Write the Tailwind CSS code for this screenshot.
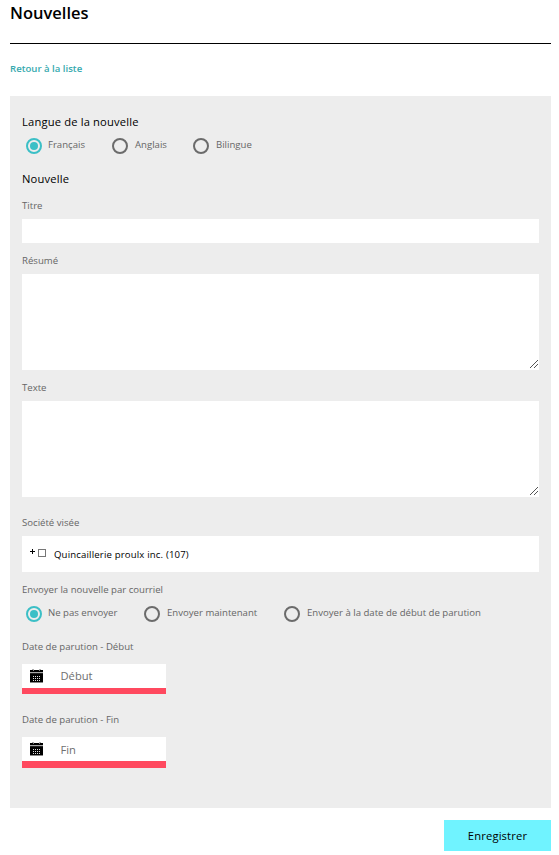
<!DOCTYPE html>
<html lang="fr">
<head>
    <meta charset="UTF-8">
    <meta name="viewport" content="width=device-width, initial-scale=1.0">
    <title>Nouvelles</title>
    <script src="https://cdn.jsdelivr.net/npm/@tailwindcss/browser@4"></script>
</head>
<body class="bg-white pl-[10px] pr-2 font-['Open_Sans',sans-serif] text-[9.6px] leading-4 text-[#666]">
    <h1 class="h-[26px] text-[16.5px] leading-[26px] font-semibold text-black">Nouvelles</h1>
    <hr class="mt-[17px] border-t border-black">
    <a href="#" class="mt-[17px] mb-[19px] block w-fit font-semibold text-[#35a9ae]">Retour à la liste</a>

    <form class="h-[712px] bg-[#ededed] px-3 pt-[18px]">
        <h2 class="text-[11.2px] leading-4 font-medium tracking-[0.16px] text-black">Langue de la nouvelle</h2>
        <div class="mt-2 flex h-4 pl-1">
            <label class="flex w-[86px] gap-1.5">
                <span class="flex size-4 shrink-0 items-center justify-center rounded-full border-2 border-[#3bbfc6]"><span class="size-2 rounded-full bg-[#3bbfc6]"></span></span>
                <span class="-mt-px whitespace-nowrap">Français</span>
            </label>
            <label class="flex w-[81px] gap-[7px]">
                <span class="size-4 shrink-0 rounded-full border-2 border-[#6b6b6b]"></span>
                <span class="-mt-px whitespace-nowrap">Anglais</span>
            </label>
            <label class="flex gap-[7px]">
                <span class="size-4 shrink-0 rounded-full border-2 border-[#6b6b6b]"></span>
                <span class="-mt-px whitespace-nowrap">Bilingue</span>
            </label>
        </div>

        <h2 class="mt-[17px] text-[11.2px] leading-4 font-medium tracking-[0.16px] text-black">Nouvelle</h2>
        <label for="titre" class="mt-[11px] block">Titre</label>
        <input type="text" id="titre" class="mt-[5px] block h-6 w-full bg-white px-2">
        <label for="resume" class="mt-[10px] block">Résumé</label>
        <div class="relative mt-[5px]">
            <textarea id="resume" class="block h-24 w-full resize-none bg-white p-2"></textarea>
            <svg class="absolute right-px bottom-0.5 h-2 w-2" viewBox="0 0 8 8" shape-rendering="crispEdges"><path fill="#555" d="M0 7h1v1H0zM1 6h1v1H1zM2 5h1v1H2zM3 4h1v1H3zM4 3h1v1H4zM5 2h1v1H5zM6 1h1v1H6zM7 0h1v1H7zM4 7h1v1H4zM5 6h1v1H5zM6 5h1v1H6zM7 4h1v1H7z"/></svg>
        </div>
        <label for="texte" class="mt-[10px] block">Texte</label>
        <div class="relative mt-[5px]">
            <textarea id="texte" class="block h-24 w-full resize-none bg-white p-2"></textarea>
            <svg class="absolute right-px bottom-0.5 h-2 w-2" viewBox="0 0 8 8" shape-rendering="crispEdges"><path fill="#555" d="M0 7h1v1H0zM1 6h1v1H1zM2 5h1v1H2zM3 4h1v1H3zM4 3h1v1H4zM5 2h1v1H5zM6 1h1v1H6zM7 0h1v1H7zM4 7h1v1H4zM5 6h1v1H5zM6 5h1v1H6zM7 4h1v1H7z"/></svg>
        </div>

        <p class="mt-[18px]">Société visée</p>
        <div class="mt-[5px] flex h-9 items-center bg-white pl-2 font-medium text-black">
            <svg class="-mt-[5px] h-[5px] w-[5px]" viewBox="0 0 5 5" shape-rendering="crispEdges"><path d="M2 0h1v5H2zM0 2h5v1H0z"/></svg>
            <span class="-mt-0.5 ml-[3px] size-2 border border-[#767676] bg-white"></span>
            <span class="mt-0.5 ml-2 tracking-[0.16px]">Quincaillerie proulx inc. (107)</span>
        </div>

        <p class="mt-[10px]">Envoyer la nouvelle par courriel</p>
        <div class="mt-2 flex h-4 pl-1">
            <label class="flex w-[118px] gap-1.5">
                <span class="flex size-4 shrink-0 items-center justify-center rounded-full border-2 border-[#3bbfc6]"><span class="size-2 rounded-full bg-[#3bbfc6]"></span></span>
                <span class="-mt-px whitespace-nowrap">Ne pas envoyer</span>
            </label>
            <label class="flex w-[140px] gap-[7px]">
                <span class="size-4 shrink-0 rounded-full border-2 border-[#6b6b6b]"></span>
                <span class="-mt-px whitespace-nowrap">Envoyer maintenant</span>
            </label>
            <label class="flex gap-[7px]">
                <span class="size-4 shrink-0 rounded-full border-2 border-[#6b6b6b]"></span>
                <span class="-mt-px whitespace-nowrap">Envoyer à la date de début de parution</span>
            </label>
        </div>

        <label for="debut" class="mt-[17px] block">Date de parution - Début</label>
        <div class="mt-[9px] flex h-[30px] w-36 items-center border-b-[6px] border-[#ff495f] bg-white pl-2">
            <svg class="h-[14px] w-[13px] shrink-0" viewBox="0 0 13 14" shape-rendering="crispEdges"><path fill="#000" d="M0 1h13v2H0zM0 5h13v8H0z"/><path fill="#aaa" d="M2 0h2v1H2zM9 0h2v1H9zM0 3h13v1H0z"/><path fill="#888" d="M3 1h1v1H3zM9 1h1v1H9zM0 13h13v1H0z"/><path fill="#222" d="M0 4h13v1H0z"/><path fill="#ddd" d="M3 7h1v1H3zM5 7h1v1H5zM7 7h1v1H7zM9 7h1v1H9zM3 9h1v1H3zM5 9h1v1H5zM7 9h1v1H7zM9 9h1v1H9zM3 11h1v1H3zM5 11h1v1H5zM7 11h1v1H7zM9 11h1v1H9z"/></svg>
            <input type="text" id="debut" placeholder="Début" class="ml-[17.5px] w-20 text-[11.2px] placeholder:text-[#6f6f6f]">
        </div>
        <label for="fin" class="mt-[18px] block">Date de parution - Fin</label>
        <div class="mt-[9px] flex h-[31px] w-36 items-center border-b-[7px] border-[#ff495f] bg-white pl-2">
            <svg class="h-[14px] w-[13px] shrink-0" viewBox="0 0 13 14" shape-rendering="crispEdges"><path fill="#000" d="M0 1h13v2H0zM0 5h13v8H0z"/><path fill="#aaa" d="M2 0h2v1H2zM9 0h2v1H9zM0 3h13v1H0z"/><path fill="#888" d="M3 1h1v1H3zM9 1h1v1H9zM0 13h13v1H0z"/><path fill="#222" d="M0 4h13v1H0z"/><path fill="#ddd" d="M3 7h1v1H3zM5 7h1v1H5zM7 7h1v1H7zM9 7h1v1H9zM3 9h1v1H3zM5 9h1v1H5zM7 9h1v1H7zM9 9h1v1H9zM3 11h1v1H3zM5 11h1v1H5zM7 11h1v1H7zM9 11h1v1H9z"/></svg>
            <input type="text" id="fin" placeholder="Fin" class="mt-px ml-[17.5px] w-20 text-[11.2px] placeholder:text-[#6f6f6f]">
        </div>
    </form>

    <div class="mt-3 flex justify-end">
        <button type="submit" class="h-[31px] w-[107px] bg-[#70f3ff] text-[11.2px] font-medium tracking-[0.16px] text-black">Enregistrer</button>
    </div>
</body>
</html>
